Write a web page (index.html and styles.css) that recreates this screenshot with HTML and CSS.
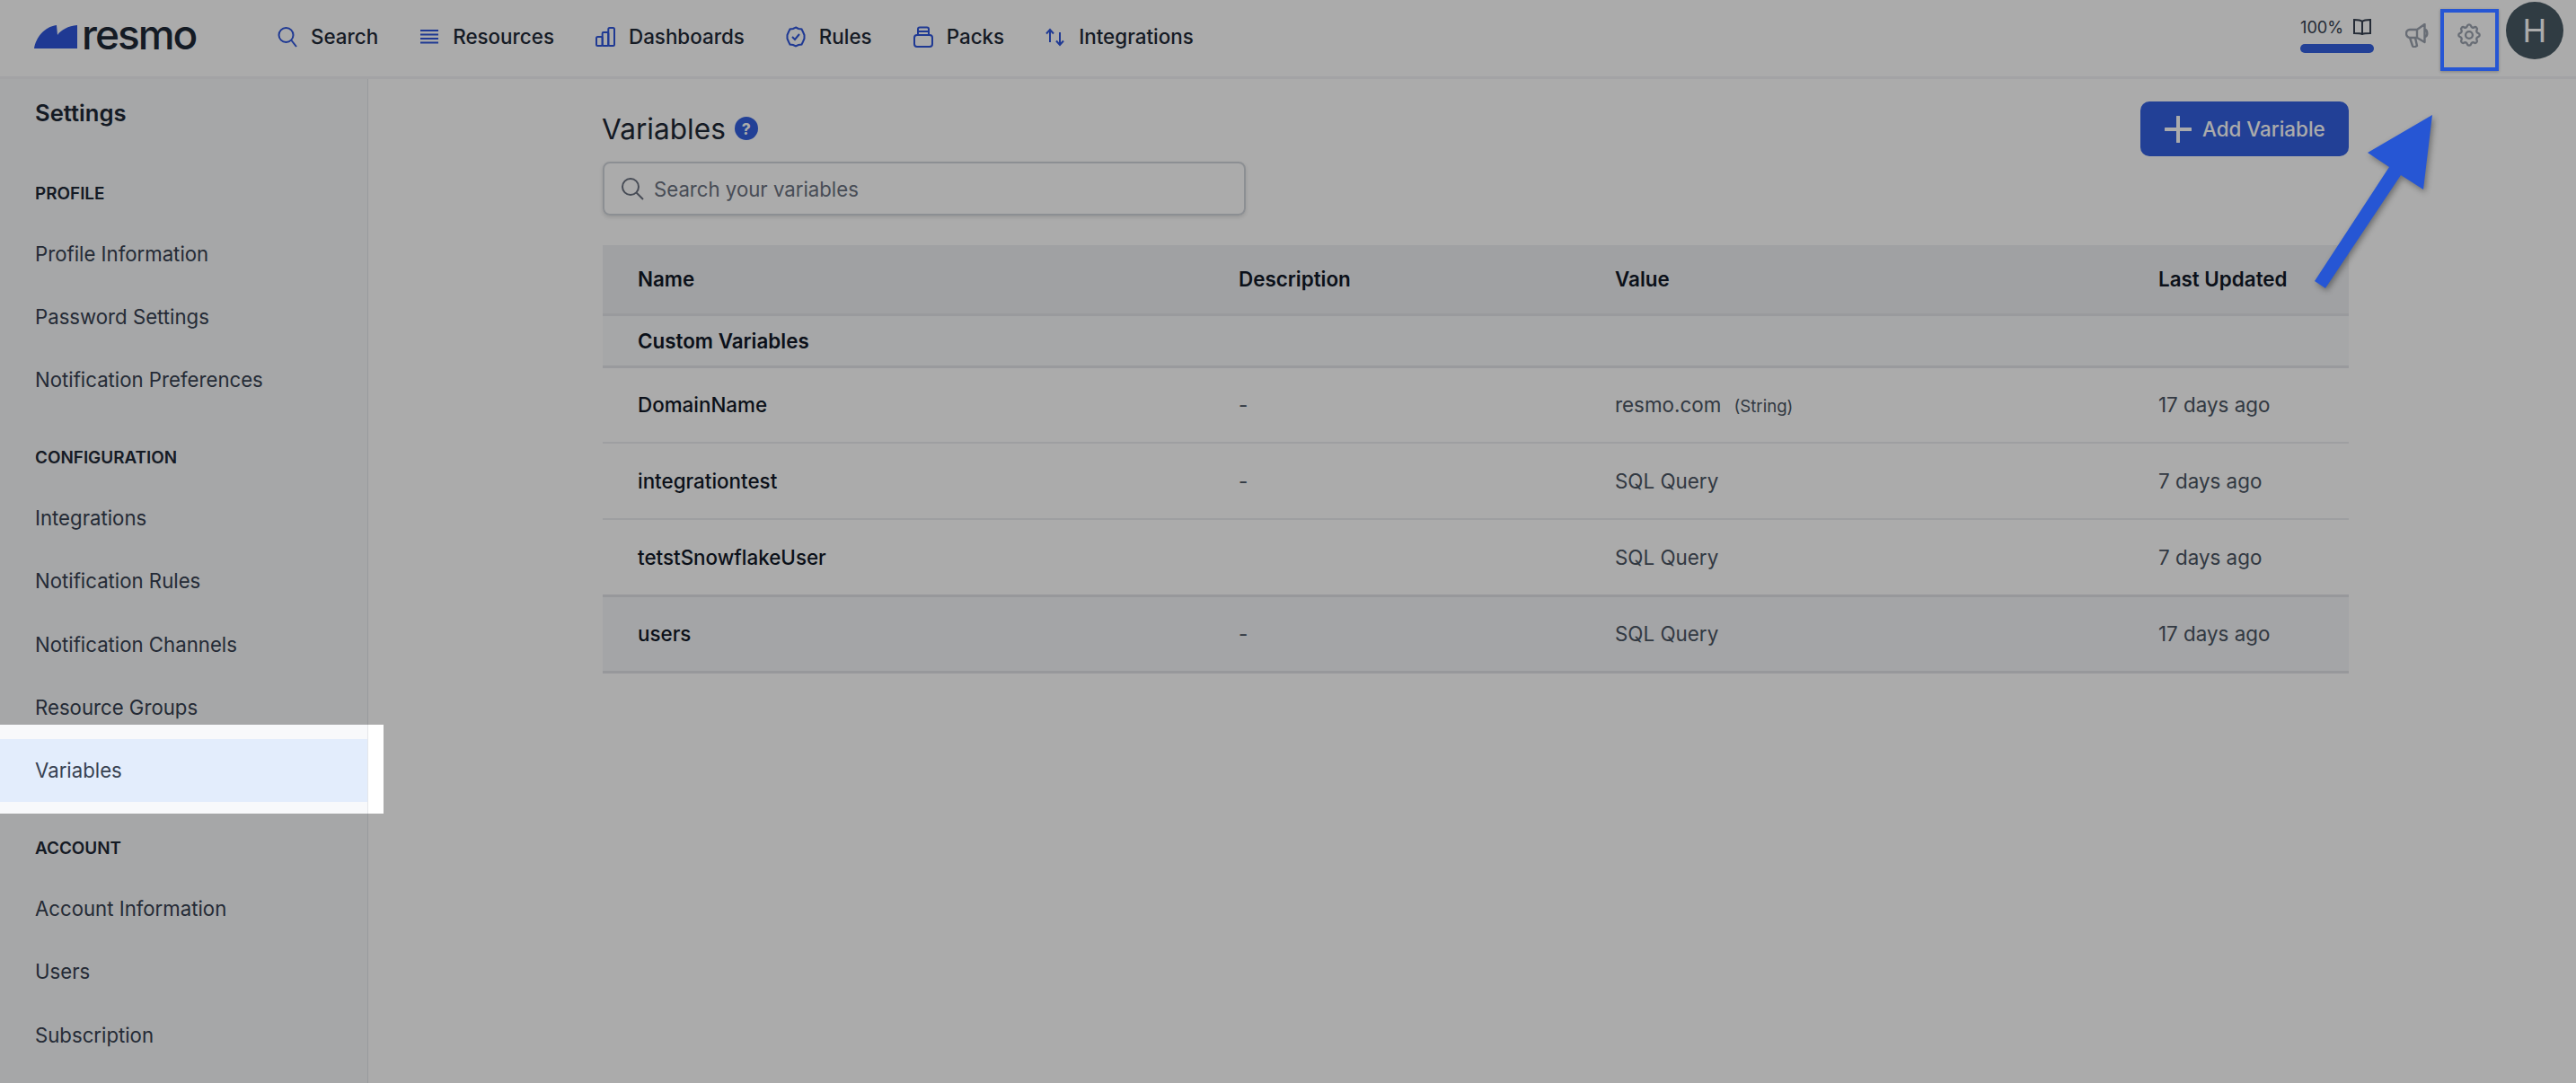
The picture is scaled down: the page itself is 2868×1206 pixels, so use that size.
FILE: index.html
```html
<!DOCTYPE html>
<html lang="en">
<head>
  <meta charset="UTF-8">
  <title>Variables - Settings</title>
  <link rel="stylesheet" href="styles.css">
</head>
<body>

  <header class="topbar">
    <a class="logo">
      <svg class="logo-mark" viewBox="0 0 48 26"><path d="M0 26 C2 14 11 2 25 0 L26 11 C30 5 38 1 48 0 V26 Z"/></svg>
      <span class="logo-text">resmo</span>
    </a>
    <nav class="mainnav">
      <a class="navlink"><svg viewBox="0 0 22 24"><circle cx="9.500" cy="10" r="8"/><path d="M15.500 16 L21 23"/></svg>Search</a>
      <a class="navlink"><svg viewBox="0 0 22 24"><path d="M1 5H21M1 9.500H21M1 14H21M1 18.500H21"/></svg>Resources</a>
      <a class="navlink"><svg viewBox="0 0 22 24"><rect x="1" y="12" width="6.700" height="10" rx="1.500"/><rect x="7.700" y="7" width="6.600" height="15" rx="1"/><rect x="14.300" y="2" width="6.700" height="20" rx="1.500"/></svg>Dashboards</a>
      <a class="navlink"><svg viewBox="0 0 22 24"><path d="M11 1.500 L14 3 L17.500 3.500 L19 6.500 L20.500 10 V14 L19 17.500 L17.500 20.500 L14 21 L11 22.500 L8 21 L4.500 20.500 L3 17.500 L1.500 14 V10 L3 6.500 L4.500 3.500 L8 3 Z"/><path d="M7 12 L10 15 L15 9"/></svg>Rules</a>
      <a class="navlink"><svg viewBox="0 0 22 24"><rect x="1" y="10" width="20" height="13" rx="3"/><path d="M5 10 V3.500 Q5 1.500 7 1.500 H15 Q17 1.500 17 3.500 V10 M5 6 H17"/></svg>Packs</a>
      <a class="navlink"><svg viewBox="0 0 22 24"><path d="M5 18 V4 M1 8.500 L5 4 L9 8.500 M16 7 V21 M12 16.500 L16 21 L20 16.500"/></svg>Integrations</a>
    </nav>
    <div class="topright">
      <div class="progress">
        <div class="progress-label">
          <span>100%</span>
          <svg class="book" viewBox="0 0 22 20"><path d="M11 4 C9 2 5 2 2 2 V17 C5 17 9 17 11 18 C13 17 17 17 20 17 V2 C17 2 13 2 11 4 Z M11 4 V18"/></svg>
        </div>
        <div class="progress-bar"></div>
      </div>
      <svg class="icon-btn megaphone" viewBox="0 0 26 27"><path d="M13 7 H5 C2.500 7 1 9 1 11.500 C1 14 3 16 5 16 H13 L21.500 21 V1 Z M13 7 V16 M5 16 L8 25 Q9 27 11 26 L13 25 L11 16 M21.500 7 C25 7 25.500 15 21.500 15"/></svg>
      <svg class="icon-btn gear" viewBox="2 2 20 20"><circle cx="12" cy="12" r="3"/><path d="M10.325 4.317c.426-1.756 2.924-1.756 3.35 0a1.724 1.724 0 002.573 1.066c1.543-.94 3.31.826 2.37 2.37a1.724 1.724 0 001.065 2.572c1.756.426 1.756 2.924 0 3.35a1.724 1.724 0 00-1.066 2.573c.94 1.543-.826 3.31-2.37 2.37a1.724 1.724 0 00-2.572 1.065c-.426 1.756-2.924 1.756-3.35 0a1.724 1.724 0 00-2.573-1.066c-1.543.94-3.31-.826-2.37-2.37a1.724 1.724 0 00-1.065-2.572c-1.756-.426-1.756-2.924 0-3.35a1.724 1.724 0 001.066-2.573c-.94-1.543.826-3.31 2.37-2.37.996.608 2.296.07 2.572-1.065z"/></svg>
      <div class="avatar">H</div>
    </div>
  </header>

  <div class="layout">
    <aside class="sidebar">
      <h2 class="sidebar-title">Settings</h2>
      <h3 class="section">PROFILE</h3>
      <a class="item">Profile Information</a>
      <a class="item">Password Settings</a>
      <a class="item">Notification Preferences</a>
      <h3 class="section">CONFIGURATION</h3>
      <a class="item">Integrations</a>
      <a class="item">Notification Rules</a>
      <a class="item">Notification Channels</a>
      <a class="item">Resource Groups</a>
      <a class="item active">Variables</a>
      <h3 class="section">ACCOUNT</h3>
      <a class="item">Account Information</a>
      <a class="item">Users</a>
      <a class="item">Subscription</a>
    </aside>

    <main class="content">
      <div class="page-head">
        <div class="head-left">
          <div class="title-row">
            <h1>Variables</h1>
            <span class="help">?</span>
          </div>
          <div class="searchbox">
            <svg viewBox="0 0 26 26"><circle cx="11" cy="11" r="9"/><path d="M17.500 17.500 L25 25"/></svg>
            <span>Search your variables</span>
          </div>
        </div>
        <button class="add-btn">
          <svg viewBox="0 0 30 30"><path d="M15 1 V29 M1 15 H29"/></svg>
          Add Variable
        </button>
      </div>

      <table class="vars">
        <colgroup>
          <col class="c-name"><col class="c-desc"><col class="c-value"><col>
        </colgroup>
        <thead>
          <tr><th>Name</th><th>Description</th><th>Value</th><th>Last Updated</th></tr>
        </thead>
        <tbody>
          <tr class="group"><td colspan="4">Custom Variables</td></tr>
          <tr><td class="name">DomainName</td><td>-</td><td>resmo.com <small>(String)</small></td><td>17 days ago</td></tr>
          <tr><td class="name">integrationtest</td><td>-</td><td>SQL Query</td><td>7 days ago</td></tr>
          <tr class="before-hover"><td class="name">tetstSnowflakeUser</td><td></td><td>SQL Query</td><td>7 days ago</td></tr>
          <tr class="hover"><td class="name">users</td><td>-</td><td>SQL Query</td><td>17 days ago</td></tr>
        </tbody>
      </table>
    </main>
  </div>

  <!-- tutorial overlay -->
  <div class="spotlight"></div>
  <div class="gear-box"></div>
  <svg class="arrow" viewBox="0 0 150 210"><path d="M134 3 L124 86 L99 70 L15 196 L3 188 L86 61 L62 45 Z"/></svg>

</body>
</html>
```

FILE: styles.css
```css
* { box-sizing: border-box; }
html, body { margin: 0; padding: 0; }
body { width: 2868px; height: 1206px; overflow: hidden; position: relative; background: #fff; font-family: "Inter", "Liberation Sans", sans-serif; color: #374151; }

/* top bar */
.topbar { height: 88px; border-bottom: 3px solid #f3f4f6; display: flex; align-items: center; padding-left: 38px; padding-bottom: 4px; }
.logo { display: flex; align-items: center; gap: 5px; width: 271px; }
.logo-mark { width: 48px; height: 26px; fill: #2f56dc; }
.logo-text { font-size: 46px; line-height: 26px; font-weight: 500; letter-spacing: -2px; color: #1f2937; padding-bottom: 5px; }
.mainnav { display: flex; gap: 46px; }
.navlink { display: flex; align-items: center; gap: 15px; font-size: 22.4px; font-weight: 500; color: #1f2937; }
.navlink svg { width: 22px; height: 24px; fill: none; stroke: #2f56dc; stroke-width: 2; }
.topright { margin-left: auto; display: flex; align-items: flex-start; height: 85px; }
.progress { width: 82px; margin-top: 20px; margin-right: 35px; }
.progress-label { display: flex; justify-content: space-between; align-items: center; font-size: 18.2px; color: #374151; height: 24px; }
.book { width: 22px; height: 20px; margin-right: 2px; fill: none; stroke: #374151; stroke-width: 2; }
.progress-bar { height: 10px; border-radius: 5px; background: #3360e0; margin-top: 7px; }
.icon-btn { fill: none; stroke: #9ca3af; }
.megaphone { width: 26px; height: 27px; margin-top: 28px; stroke-width: 2.4; stroke-linejoin: round; }
.gear { width: 26px; height: 26px; margin-top: 28px; margin-left: 32px; margin-right: 28px; stroke-width: 1.800; }
.avatar { width: 64px; height: 64px; margin-top: 4px; margin-right: 14px; border-radius: 50%; background: #485a65; color: #fff; font-size: 36px; display: flex; align-items: center; justify-content: center; }

.layout { display: flex; height: 1118px; }

/* sidebar */
.sidebar { width: 410px; flex: none; background: #f8f9fb; border-right: 1px solid #e5e7eb; }
.sidebar-title { margin: 0; height: 76px; padding: 21px 0 0 39px; font-size: 25.6px; line-height: 34px; font-weight: 600; color: #1f2937; }
.section { margin: 0; height: 83px; padding: 41px 0 0 39px; font-size: 18.9px; line-height: 22px; font-weight: 600; color: #1f2937; }
.item { display: flex; align-items: center; height: 70.4px; padding-left: 39px; font-size: 22.2px; color: #374151; }
.item.active { background: #e3edfc; }

/* main */
.content { flex: 1; padding: 25px 253px 0 261px; }
.page-head { display: flex; justify-content: space-between; align-items: flex-start; height: 160px; }
.title-row { display: flex; align-items: center; gap: 10px; height: 60px; margin-bottom: 7px; }
h1 { margin: 0 0 0 -1px; font-size: 31.6px; font-weight: 400; color: #1f2937; }
.help { width: 26px; height: 26px; border-radius: 50%; background: #3360e0; color: #fff; font-size: 18px; font-weight: 700; display: flex; align-items: center; justify-content: center; }
.searchbox { width: 716px; height: 60px; border: 2px solid #d1d5db; border-radius: 8px; box-shadow: 0 2px 4px rgba(0,0,0,.12); display: flex; align-items: center; gap: 11px; padding-left: 18px; font-size: 22.2px; color: #6b7280; }
.searchbox svg { width: 26px; height: 26px; fill: none; stroke: #6b7280; stroke-width: 2; }
.add-btn { width: 232px; height: 61px; border: none; border-radius: 10px; background: #3360e0; color: #fff; font-family: inherit; font-size: 22.4px; font-weight: 500; display: flex; align-items: center; gap: 12px; padding-left: 27px; }
.add-btn svg { width: 30px; height: 30px; fill: none; stroke: #fff; stroke-width: 4; stroke-linecap: round; }

/* table */
.vars { width: 1944px; table-layout: fixed; border-collapse: collapse; font-size: 22.4px; }
.c-name { width: 669px; }
.c-desc { width: 419px; }
.c-value { width: 605px; }
.vars th { height: 77px; padding: 0 0 0 39px; text-align: left; font-weight: 600; color: #111827; background: #eff0f3; border-bottom: 3px solid #e5e6eb; }
.vars td { height: 85px; padding: 0 0 0 39px; color: #4b5563; border-bottom: 2px solid #eceef1; }
.vars .group td { height: 58px; font-weight: 600; color: #111827; background: #f8f9fb; border-bottom: 3px solid #e5e6eb; }
.vars td.name { font-weight: 500; color: #111827; }
.vars small { font-size: 18.6px; margin-left: 8px; }
.before-hover td { border-bottom: 3px solid #e2e3e8 !important; }
.hover td { background: #f5f6f9; border-bottom: 3px solid #e2e3e8 !important; }

/* tutorial overlay */
.spotlight { position: absolute; left: 0; top: 807px; width: 427px; height: 99px; box-shadow: 0 0 0 3000px rgba(0,0,0,.33); }
.gear-box { position: absolute; left: 2717px; top: 10px; width: 65px; height: 69px; border: 4px solid #2656d4; box-shadow: 0 1px 3px rgba(0,0,0,.25); }
.arrow { position: absolute; left: 2574px; top: 125px; width: 150px; height: 210px; fill: #2656d4; filter: drop-shadow(2px 3px 3px rgba(0,0,0,.35)); }
```
